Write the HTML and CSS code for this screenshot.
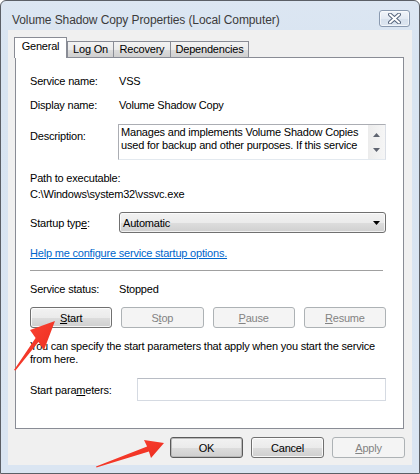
FILE: index.html
```html
<!DOCTYPE html>
<html>
<head>
<meta charset="utf-8">
<link rel="stylesheet" href="styles.css">
</head>
<body>
<div class="window">
  <div class="titlebar">
    <span class="title">Volume Shadow Copy Properties (Local Computer)</span>
    <div class="close">
      <svg width="13" height="11" viewBox="0 0 13 11">
        <path d="M2 1.5 L11 9.5 M11 1.5 L2 9.5" stroke="#56657c" stroke-width="4" stroke-linecap="round"/>
        <path d="M2 1.5 L11 9.5 M11 1.5 L2 9.5" stroke="#ffffff" stroke-width="2" stroke-linecap="round"/>
      </svg>
    </div>
  </div>
  <div class="client">
    <div class="tabs">
      <div class="tab active">General</div>
      <div class="tab w-logon">Log On</div>
      <div class="tab w-recovery">Recovery</div>
      <div class="tab w-deps">Dependencies</div>
    </div>
    <div class="panel">
      <div class="row r1"><span>Service name:</span><span class="val">VSS</span></div>
      <div class="row r2"><span>Display name:</span><span class="val">Volume Shadow Copy</span></div>
      <div class="row desc-row">
        <span class="desc-label">Description:</span>
        <div class="textbox">
          <div class="textbox-text">Manages and implements Volume Shadow Copies<br>used for backup and other purposes. If this service</div>
          <div class="vscroll">
            <svg width="7" height="4" viewBox="0 0 7 4"><path d="M0 4 L3.5 0 L7 4 Z" fill="#5f6470"/></svg>
            <svg width="7" height="4" viewBox="0 0 7 4"><path d="M0 0 L3.5 4 L7 0 Z" fill="#5f6470"/></svg>
          </div>
        </div>
      </div>
      <div class="line path-label">Path to executable:</div>
      <div class="line">C:\Windows\system32\vssvc.exe</div>
      <div class="row startup-row">
        <span>Startup typ<u>e</u>:</span>
        <div class="combo">
          <span>Automatic</span>
          <svg width="7" height="4" viewBox="0 0 7 4"><path d="M0 0 L3.5 4 L7 0 Z" fill="#000"/></svg>
        </div>
      </div>
      <div class="line link-line"><a class="link">Help me configure service startup options.</a></div>
      <div class="separator"></div>
      <div class="row status-row"><span>Service status:</span><span class="val">Stopped</span></div>
      <div class="svc-buttons">
        <div class="btn"><span><u>S</u>tart</span></div>
        <div class="btn disabled"><span>S<u>t</u>op</span></div>
        <div class="btn disabled"><span><u>P</u>ause</span></div>
        <div class="btn disabled"><span><u>R</u>esume</span></div>
      </div>
      <div class="para">You can specify the start parameters that apply when you start the service<br>from here.</div>
      <div class="param-row">
        <span>Start para<u>m</u>eters:</span>
        <div class="input"></div>
      </div>
    </div>
    <div class="footer">
      <div class="btn fbtn default"><span>OK</span></div>
      <div class="btn fbtn"><span>Cancel</span></div>
      <div class="btn fbtn disabled"><span><u>A</u>pply</span></div>
    </div>
  </div>
  <svg class="arrows" width="420" height="474" viewBox="0 0 420 474">
    <defs>
      <linearGradient id="rg" x1="0" y1="0" x2="1" y2="1">
        <stop offset="0" stop-color="#ff4a38"/>
        <stop offset="1" stop-color="#e8261a"/>
      </linearGradient>
    </defs>
    <polygon points="14,370 35.6,337.9 30,330 55,321 44,350 38.4,342.1 15.5,370.5" fill="url(#rg)"/>
    <polygon points="96,466.5 147.1,446.6 144,440 164,443 151,458 148.9,451.4 96.5,467.5" fill="url(#rg)"/>
  </svg>
</div>
</body>
</html>
```

FILE: styles.css
```css
html, body {
  margin: 0;
  padding: 0;
  background: #ffffff;
}

body {
  font-family: "Liberation Sans", Arial, sans-serif;
  font-size: 11px;
  letter-spacing: -0.2px;
  color: #000;
}

.window {
  position: relative;
  box-sizing: border-box;
  width: 420px;
  height: 474px;
  border: 1px solid #5b5f66;
  border-radius: 6px 6px 0 0;
  background: linear-gradient(#dce6f2, #d8e4f1 60px, #dae5f2);
  overflow: hidden;
}

.titlebar {
  height: 29px;
  display: flex;
  align-items: flex-start;
  padding: 0 9px 0 11px;
  box-sizing: border-box;
}

.title {
  margin-top: 12px;
  font-size: 12px;
  letter-spacing: -0.1px;
  color: #3b3b3b;
  line-height: 14px;
  white-space: nowrap;
}

.close {
  margin-left: auto;
  margin-top: 9px;
  width: 31px;
  height: 17px;
  box-sizing: border-box;
  border: 1px solid #8a9ab0;
  border-radius: 3px;
  background: linear-gradient(#f1f5fa, #e3eaf3 50%, #d6e0ec 51%, #dde6f1);
  display: flex;
  align-items: center;
  justify-content: center;
  box-shadow: inset 0 0 0 1px rgba(255,255,255,0.6);
}

.client {
  margin: 0 7px;
  height: 435px;
  background: #f0f0f0;
  padding: 7px 0 0 7px;
  box-sizing: border-box;
}

.tabs {
  display: flex;
  align-items: flex-end;
  margin-left: -1px;
  height: 20px;
  position: relative;
  z-index: 2;
}

.tab {
  box-sizing: border-box;
  height: 16px;
  border: 1px solid #898c95;
  border-bottom: none;
  background: linear-gradient(#f3f3f3, #ebebeb 50%, #dddddd 51%, #cfcfcf);
  text-align: center;
  line-height: 15px;
  margin-left: -1px;
  white-space: nowrap;
}

.tab.active {
  height: 21px;
  margin-bottom: -1px;
  width: 53px;
  margin-left: 0;
  margin-right: 1px;
  background: #ffffff;
  line-height: 16px;
  padding-bottom: 3px;
}

.w-logon { width: 47px; }
.w-recovery { width: 58px; }
.w-deps { width: 79px; }

.panel {
  box-sizing: border-box;
  width: 389px;
  height: 372px;
  border: 1px solid #898c95;
  background: #ffffff;
  padding: 15px 17px 0 14px;
  display: flex;
  flex-direction: column;
}

.row {
  display: grid;
  grid-template-columns: 89px 1fr;
  align-items: center;
}

.row > span, .line, .para {
  line-height: 16px;
  white-space: nowrap;
}

.r2 { margin-top: 8px; }

.desc-row {
  margin-top: 11px;
  align-items: start;
}

.desc-label {
  padding-top: 4px;
}

.textbox {
  margin-left: -1px;
  height: 36px;
  box-sizing: border-box;
  border: 1px solid #abadb3;
  border-right-color: #dbdfe6;
  border-bottom-color: #e3e9ef;
  display: flex;
  background: #fff;
}

.textbox-text {
  flex: 1;
  padding: 1px 0 0 2px;
  line-height: 13px;
  white-space: nowrap;
  overflow: hidden;
}

.vscroll {
  width: 17px;
  background: linear-gradient(90deg, #ececec, #f6f6f6);
  display: flex;
  flex-direction: column;
  align-items: center;
  justify-content: space-between;
  padding: 8px 0 7px;
  box-sizing: border-box;
}

.path-label { margin-top: 10px; }

.startup-row { margin-top: 10px; }

.combo {
  height: 21px;
  box-sizing: border-box;
  border: 1px solid #707070;
  border-radius: 3px;
  background: linear-gradient(#f2f2f2, #ebebeb 50%, #dddddd 51%, #cfcfcf);
  box-shadow: inset 0 0 0 1px rgba(255,255,255,0.7);
  display: flex;
  align-items: center;
  justify-content: space-between;
  padding: 0 5px 0 3px;
}

.link-line { margin-top: 12px; }

.link {
  color: #0066cc;
  text-decoration: underline;
}

.separator {
  margin-top: 9px;
  margin-right: 3px;
  height: 1px;
  background: #a0a0a0;
}

.status-row { margin-top: 10px; }

.svc-buttons {
  margin-top: 10px;
  display: grid;
  grid-template-columns: repeat(4, 1fr);
  column-gap: 9px;
}

.btn {
  height: 21px;
  box-sizing: border-box;
  border: 1px solid #707070;
  border-radius: 3px;
  background: linear-gradient(#f2f2f2, #ebebeb 50%, #dddddd 51%, #cfcfcf);
  box-shadow: inset 0 0 0 1px rgba(255,255,255,0.8);
  display: flex;
  align-items: center;
  justify-content: center;
  white-space: nowrap;
}

.btn.disabled {
  border-color: #adb2b5;
  background: #f4f4f4;
  color: #838383;
  box-shadow: none;
}

.para {
  margin-top: 12px;
  line-height: 13px;
}

.param-row {
  margin-top: 12px;
  display: flex;
  align-items: center;
}

.param-row > span {
  width: 107px;
  line-height: 16px;
  white-space: nowrap;
}

.input {
  flex: 1;
  height: 23px;
  box-sizing: border-box;
  border: 1px solid #d5dae2;
  border-top-color: #b8bcc4;
  background: #fff;
}

.footer {
  margin-top: 8px;
  display: flex;
  justify-content: flex-end;
  gap: 8px;
  padding-right: 7px;
}

.fbtn {
  width: 73px;
}

.fbtn.default {
  border-color: #5a5a5a;
  box-shadow: inset 0 0 0 1px #b9b9b9;
}

.arrows {
  position: absolute;
  left: -1px;
  top: -1px;
  pointer-events: none;
}
```
